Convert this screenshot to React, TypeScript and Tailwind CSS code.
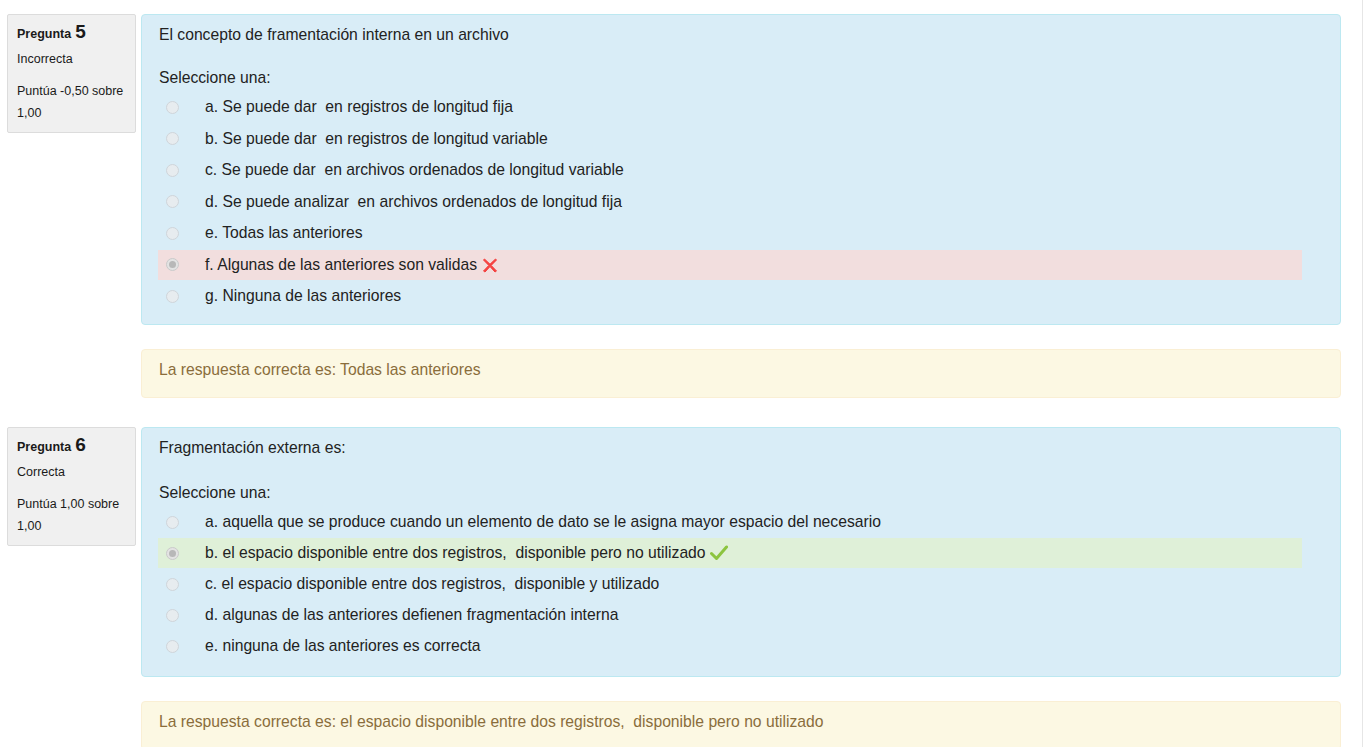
import type { ReactNode } from "react";

type Option = {
	label: string;
	selected?: boolean;
	state?: "correct" | "incorrect";
};

type Question = {
	number: number;
	status: string;
	score: string;
	text: string;
	options: Option[];
	answer: string;
	compact?: boolean;
};

const QUESTIONS: Question[] = [
	{
		number: 5,
		status: "Incorrecta",
		score: "Puntúa -0,50 sobre",
		text: "El concepto de framentación interna en un archivo",
		options: [
			{ label: "a. Se puede dar\u00a0 en registros de longitud fija" },
			{ label: "b. Se puede dar\u00a0 en registros de longitud variable" },
			{ label: "c. Se puede dar\u00a0 en archivos ordenados de longitud variable" },
			{ label: "d. Se puede analizar\u00a0 en archivos ordenados de longitud fija" },
			{ label: "e. Todas las anteriores" },
			{
				label: "f. Algunas de las anteriores son validas",
				selected: true,
				state: "incorrect",
			},
			{ label: "g. Ninguna de las anteriores" },
		],
		answer: "La respuesta correcta es: Todas las anteriores",
	},
	{
		number: 6,
		status: "Correcta",
		score: "Puntúa 1,00 sobre",
		text: "Fragmentación externa es:",
		compact: true,
		options: [
			{
				label:
					"a. aquella que se produce cuando un elemento de dato se le asigna mayor espacio del necesario",
			},
			{
				label: "b. el espacio disponible entre dos registros,\u00a0 disponible pero no utilizado",
				selected: true,
				state: "correct",
			},
			{ label: "c. el espacio disponible entre dos registros,\u00a0 disponible y utilizado" },
			{ label: "d. algunas de las anteriores defienen fragmentación interna" },
			{ label: "e. ninguna de las anteriores es correcta" },
		],
		answer:
			"La respuesta correcta es: el espacio disponible entre dos registros,\u00a0 disponible pero no utilizado",
	},
];

function CrossIcon() {
	return (
		<svg width="16" height="16" viewBox="0 0 16 16" className="ml-[5px] inline-block">
			<path d="M2.5 2 L8 7.2 L13.5 2 L14.5 3 L9.2 8.4 L14.5 14 L13 15 L8 9.6 L3 15 L1.5 14 L6.8 8.4 L1.5 3 Z" fill="#f5403f" stroke="#f5403f" strokeWidth="1" strokeLinejoin="round" />
		</svg>
	);
}

function CheckIcon() {
	return (
		<svg width="18" height="16" viewBox="0 0 18 16" className="ml-[4px] inline-block">
			<path d="M1.5 8.5 L6.5 13.5 L16.5 2" fill="none" stroke="#8cc43f" strokeWidth="3" strokeLinecap="round" strokeLinejoin="round" />
		</svg>
	);
}

function Radio({ checked }: { checked?: boolean }) {
	if (checked) {
		return (
			<span className="flex h-[13px] w-[13px] items-center justify-center rounded-full border border-[#cacaca] bg-[#e3e3e3]">
				<span className="h-[7px] w-[7px] rounded-full bg-[#b8b8b8]" />
			</span>
		);
	}
	return <span className="h-[13px] w-[13px] rounded-full border border-[#cfd5da] bg-[#e7ecef]" />;
}

function OptionRow({ option }: { option: Option }) {
	const bg =
		option.state === "incorrect"
			? "bg-[#f2dede]"
			: option.state === "correct"
				? "bg-[#dff0d8]"
				: "";
	return (
		<div className={`flex h-[30px] items-center ${bg}`}>
			<div className="flex w-[47px] shrink-0 pl-[8px]">
				<Radio checked={option.selected} />
			</div>
			<span className="flex items-center whitespace-nowrap">
				{option.label}
				{option.state === "incorrect" && <CrossIcon />}
				{option.state === "correct" && <CheckIcon />}
			</span>
		</div>
	);
}

function InfoBox({ q }: { q: Question }) {
	return (
		<div className="h-[119px] w-[129px] shrink-0 rounded-[2px] border border-[#dcdcdc] bg-[#f0f0f0] px-[9px] pt-[6px] text-[12.5px] leading-[22px] text-[#1a1a1a]">
			<div className="flex items-baseline font-bold">
				<span>Pregunta</span>
				<span className="ml-[4px] text-[19px]">{q.number}</span>
			</div>
			<div className="mt-[3px]">{q.status}</div>
			<div className="mt-[10px]">
				{q.score}
				<br />
				1,00
			</div>
		</div>
	);
}

function Box({ className, children }: { className: string; children: ReactNode }) {
	return <div className={`rounded-[4px] border ${className}`}>{children}</div>;
}

function QuestionBlock({ q }: { q: Question }) {
	return (
		<div className="flex gap-[5px]">
			<InfoBox q={q} />
			<div className="flex min-w-0 flex-1 flex-col">
				<Box
					className={`border-[#bce8f1] bg-[#d9edf7] pl-[16px] pr-[16px] pt-[9px] text-[#222] ${q.compact ? "pb-[15px]" : "pb-[13px]"}`}
				>
					<div className="pl-[1px]">{q.text}</div>
					<div className={`pl-[1px] ${q.compact ? "mt-[23px]" : "mt-[21px]"}`}>
						Seleccione una:
					</div>
					<div
						className={`mr-[22px] mt-[3px] flex flex-col ${q.compact ? "gap-[1px]" : "gap-[1.5px]"}`}
					>
						{q.options.map((o) => (
							<OptionRow key={o.label} option={o} />
						))}
					</div>
				</Box>
				<Box className="mt-[24px] border-[#faefd4] bg-[#fcf8e3] pb-[16px] pl-[17px] pt-[9px] text-[#8a6d3b]">
					{q.answer}
				</Box>
			</div>
		</div>
	);
}

export default function App() {
	return (
		<div
			className="mr-[1px] h-[747px] overflow-hidden border-r border-[#e6e6e6] bg-white"
			style={{ fontFamily: '"Liberation Sans", Arial, sans-serif' }}
		>
			<div className="flex w-[1341px] flex-col gap-[29px] pl-[7px] pt-[14px] text-[15.7px] leading-[22px]">
				{QUESTIONS.map((q) => (
					<QuestionBlock key={q.number} q={q} />
				))}
			</div>
		</div>
	);
}
